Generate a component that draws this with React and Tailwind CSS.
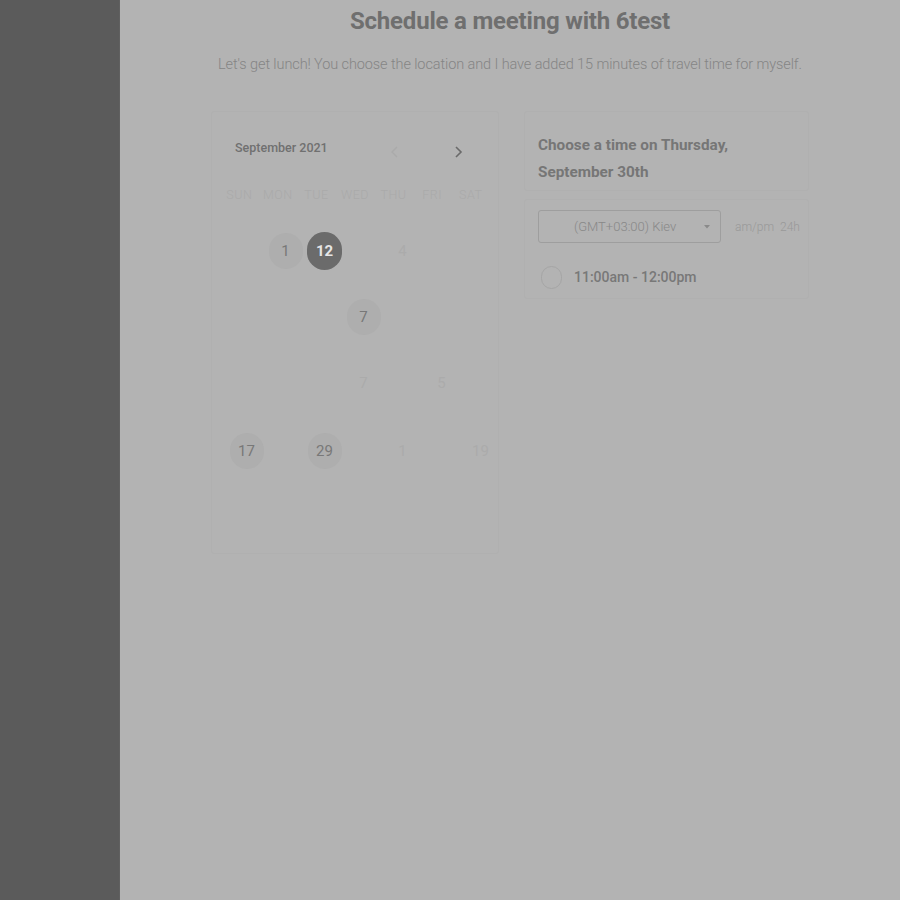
import React from "react";

const days = [
  [
    { c: 2, t: "1", k: "light" },
    { c: 3, t: "12", k: "sel" },
    { c: 5, t: "4", k: "ghost" },
    { c: 6, t: "", k: "none" },
  ],
  [{ c: 4, t: "7", k: "light" }],
  [
    { c: 4, t: "7", k: "ghost" },
    { c: 6, t: "5", k: "ghost" },
  ],
  [
    { c: 1, t: "17", k: "light" },
    { c: 3, t: "29", k: "light" },
    { c: 5, t: "1", k: "ghost" },
    { c: 7, t: "19", k: "ghost" },
  ],
];

const colClass = {
  1: "col-start-1",
  2: "col-start-2",
  3: "col-start-3",
  4: "col-start-4",
  5: "col-start-5",
  6: "col-start-6",
  7: "col-start-7",
};

function Day({ d }) {
  const base = "row-start-1 flex items-center justify-center";
  if (d.k === "sel")
    return (
      <div className={`${base} ${colClass[d.c]}`}>
        <div className="w-[35px] h-[38px] rounded-full bg-[#6b6b6b] text-[#e6e6e6] font-bold text-[15px] flex items-center justify-center">
          {d.t}
        </div>
      </div>
    );
  if (d.k === "light")
    return (
      <div className={`${base} ${colClass[d.c]}`}>
        <div className="w-[34px] h-[36px] rounded-full bg-[#aeaeae] text-[#787878] text-[15px] flex items-center justify-center">
          {d.t}
        </div>
      </div>
    );
  return (
    <div className={`${base} ${colClass[d.c]}`}>
      <div className="w-[34px] h-[34px] text-[#ababab] text-[15px] flex items-center justify-center">
        {d.t}
      </div>
    </div>
  );
}

export default function App() {
  return (
    <div
      className="w-[900px] h-[900px] flex bg-[#b3b3b3] overflow-hidden"
      style={{ fontFamily: "Roboto, 'Liberation Sans', sans-serif" }}
    >
      <div className="w-[120px] h-full bg-[#5b5b5b] border-r border-[#606060]" />
      <div className="flex-1 flex flex-col items-center">
        <h1 className="mt-[5px] text-[24px] leading-[32px] font-bold text-[#6f6f6f] tracking-[-0.2px]">
          Schedule a meeting with 6test
        </h1>
        <p className="mt-[18px] text-[14.5px] leading-[20px] font-light text-[#858585] tracking-[-0.1px]">
          Let's get lunch! You choose the location and I have added 15 minutes of travel time for myself.
        </p>
        <div className="mt-[36px] flex gap-[25px] w-[598px]">
          {/* Calendar card */}
          <div className="w-[288px] h-[443px] border border-[#b0b0b0] rounded-[3px] flex flex-col">
            <div className="flex items-center h-[70px] pl-[23px] pt-[2px]">
              <span className="text-[12.5px] text-[#707070] font-medium">September 2021</span>
              <span className="ml-[62px] mt-[8px] text-[#aaaaaa]">
                <svg width="10" height="14" viewBox="0 0 10 14" fill="none">
                  <path d="M7 2L2 7l5 5" stroke="currentColor" strokeWidth="1.4" />
                </svg>
              </span>
              <span className="ml-[53px] mt-[8px] text-[#6a6a6a]">
                <svg width="10" height="14" viewBox="0 0 10 14" fill="none">
                  <path d="M3 2l5 5-5 5" stroke="currentColor" strokeWidth="1.6" />
                </svg>
              </span>
            </div>
            <div className="grid grid-cols-7 w-[270px] ml-[8px] mt-[4px] text-[12.5px] font-light tracking-[0.5px] text-[#aaaaaa] text-center">
              <span>SUN</span>
              <span>MON</span>
              <span>TUE</span>
              <span>WED</span>
              <span>THU</span>
              <span>FRI</span>
              <span>SAT</span>
            </div>
            <div className="flex flex-col ml-[15px] mt-[27px] gap-[33px]">
              {days.map((row, i) => (
                <div key={i} className="grid grid-cols-[repeat(7,39px)] h-[34px]">
                  {row.map((d, j) => (
                    <Day key={j} d={d} />
                  ))}
                </div>
              ))}
            </div>
          </div>
          {/* Time card */}
          <div className="w-[285px] flex flex-col gap-[8px]">
            <div className="h-[80px] border border-[#b0b0b0] rounded-[3px] pl-[13px] pt-[20px]">
              <div className="text-[15.3px] leading-[27px] font-bold text-[#767676]">
                Choose a time on Thursday,
                <br />
                September 30th
              </div>
            </div>
            <div className="h-[100px] border border-[#b0b0b0] rounded-[3px] pl-[13px] pt-[10px]">
              <div className="flex items-center">
                <div className="w-[183px] h-[33px] border border-[#9e9e9e] rounded-[3px] flex items-center pl-[35px] pr-[10px] text-[13px] font-light text-[#888888]">
                  <span className="flex-1">(GMT+03:00) Kiev</span>
                  <svg width="6" height="4" viewBox="0 0 6 4">
                    <path d="M0 0h6L3 3.5z" fill="#8a8a8a" />
                  </svg>
                </div>
                <span className="ml-[14px] text-[12px] font-light text-[#999999]">am/pm&nbsp;&nbsp;24h</span>
              </div>
              <div className="flex items-center mt-[23px]">
                <div className="ml-[3px] w-[21px] h-[23px] rounded-full border border-[#a5a5a5]" />
                <span className="ml-[12px] text-[14px] font-medium text-[#787878]">11:00am - 12:00pm</span>
              </div>
            </div>
          </div>
        </div>
      </div>
    </div>
  );
}
